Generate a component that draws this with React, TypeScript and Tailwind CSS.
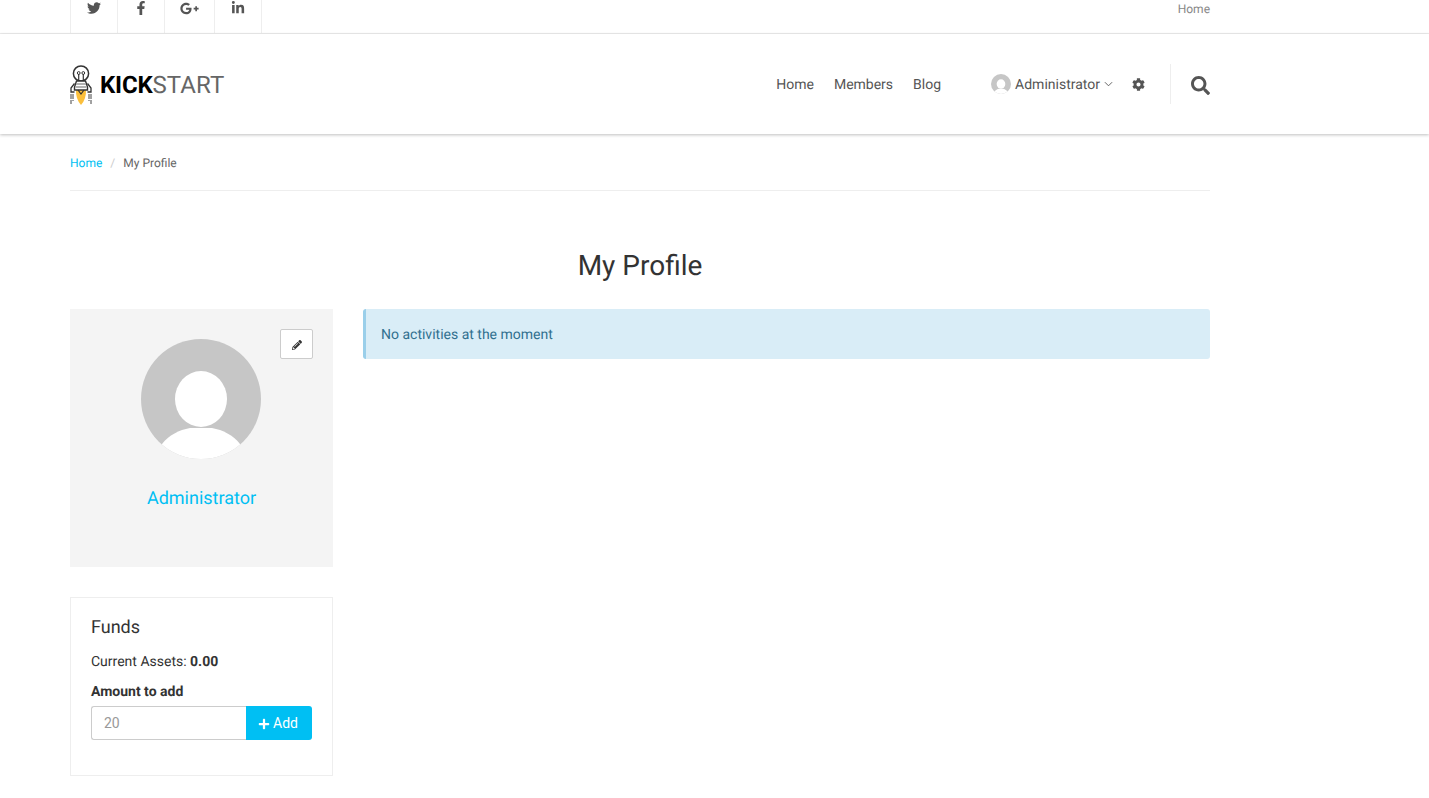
import { FaTwitter, FaFacebookF, FaGooglePlusG, FaLinkedinIn, FaCog, FaSearch, FaPencilAlt, FaPlus } from 'react-icons/fa';

const Avatar = ({ className }: { className: string }) => (
  <svg viewBox="0 0 120 120" className={className}>
    <defs>
      <clipPath id="avatar-clip">
        <circle cx="60" cy="60" r="60" />
      </clipPath>
    </defs>
    <circle cx="60" cy="60" r="60" fill="#c6c6c6" />
    <g clipPath="url(#avatar-clip)" fill="#fff">
      <ellipse cx="60" cy="60" rx="26" ry="28" />
      <path d="M21 105 C28 96 38 91 49 89 L71 89 C82 91 92 96 99 105 L99 120 L21 120 Z" />
    </g>
  </svg>
);

const Logo = () => (
  <svg viewBox="0 0 22 40" className="w-[22px] h-[40px]">
    <path d="M6 24 H16 Q16.5 34 11 40 Q5.5 34 6 24 Z" fill="#fbbf3c" />
    <circle cx="11" cy="8.5" r="7.6" fill="none" stroke="#333" strokeWidth="1.5" />
    <path d="M8.7 9 V16 M13.3 9 V16" stroke="#333" strokeWidth="1.2" fill="none" />
    <circle cx="8.7" cy="8" r="1.4" fill="none" stroke="#333" strokeWidth="1" />
    <circle cx="13.3" cy="8" r="1.4" fill="none" stroke="#333" strokeWidth="1" />
    <path d="M6.5 16 H15.5 L17.5 22 V25 H4.5 V22 Z" fill="#fff" stroke="#333" strokeWidth="1.4" />
    <path d="M6 19 H16 M5.5 22 H16.5" stroke="#999" strokeWidth="1.3" />
    <path d="M4.5 18.5 L1 23 V27 H4.5 M17.5 18.5 L21 23 V27 H17.5" fill="none" stroke="#333" strokeWidth="1.3" />
    <path d="M8 25 L11 29 L14 25" fill="none" stroke="#333" strokeWidth="1.2" />
    <path d="M1 29 V39 M3 29 V36 M19 29 V36 M21 29 V39" stroke="#444" strokeWidth="1" strokeDasharray="5 1" />
  </svg>
);

const socials = [
  { icon: <FaTwitter className="text-[14px]" />, width: 'w-[47px]', pad: 'pt-[1px]' },
  { icon: <FaFacebookF className="text-[14px]" />, width: 'w-[47px]', pad: 'pt-[1px]' },
  { icon: <FaGooglePlusG className="text-[19px]" />, width: 'w-[50px]', pad: '-mt-[1px]' },
  { icon: <FaLinkedinIn className="text-[14px]" />, width: 'w-[47px]', pad: 'pt-[1px]' },
];

export default function App() {
  return (
    <div className="min-h-[798px] bg-white text-[14px] text-[#333] font-['Roboto',sans-serif] [text-rendering:geometricPrecision]">
      {/* Top bar */}
      <div className="h-[34px] border-b border-[#eeeeee]">
        <div className="ml-[70px] w-[1140px] flex justify-between">
          <div className="flex border-r border-[#eeeeee] h-[33px]">
            {socials.map((s, i) => (
              <div key={i} className={`${s.width} border-l border-[#eeeeee]`}>
                <div className={`${s.pad} flex justify-center text-[#555]`}>{s.icon}</div>
              </div>
            ))}
          </div>
          <a className="text-[12px] leading-[18px] text-[#888]">Home</a>
        </div>
      </div>

      {/* Main header */}
      <header className="h-[100px] relative shadow-[0_1px_3px_rgba(0,0,0,0.25)]">
        <div className="ml-[70px] w-[1140px] h-full flex items-center justify-between">
          <div className="flex items-center gap-[8px] pt-[2px]">
            <Logo />
            <span className="text-[24px] leading-none text-[#666]">
              <b className="font-bold text-black tracking-[-0.2px]">KICK</b>
              <span className="tracking-[0.1px]">START</span>
            </span>
          </div>
          <nav className="flex items-center h-[40px] text-[#555]">
            <a className="mr-[20px] pt-[2px]">Home</a>
            <a className="mr-[20px] pt-[2px]">Members</a>
            <a className="mr-[50px] pt-[2px]">Blog</a>
            <Avatar className="w-[20px] h-[20px] mr-[4px]" />
            <a className="pt-[2px]">Administrator</a>
            <svg viewBox="0 0 10 6" className="ml-[4px] w-[9px] h-[6px] mr-[19px]">
              <path d="M1 1 L5 5 L9 1" fill="none" stroke="#555" strokeWidth="1" />
            </svg>
            <FaCog className="text-[13px] mr-[25px]" />
            <div className="w-px h-[40px] bg-[#eeeeee] mr-[20px]" />
            <FaSearch className="text-[19px] mt-[2px]" />
          </nav>
        </div>
      </header>

      <main className="ml-[70px] w-[1140px]">
        {/* Breadcrumb */}
        <div className="h-[57px] border-b border-[#eeeeee] flex items-center gap-[8px] text-[12px] pt-[1px]">
          <a className="text-[#00bff3]">Home</a>
          <span className="text-[#ccc]">/</span>
          <span className="text-[#666]">My Profile</span>
        </div>

        <h1 className="mt-[57px] h-[61px] text-center text-[28px] leading-[36px] font-normal text-[#333]">My Profile</h1>

        <div className="flex gap-[30px] items-start">
          <div className="w-[263px] shrink-0">
            <div className="relative h-[258px] bg-[#f4f4f4] flex flex-col items-center pt-[30px]">
              <button className="absolute top-[20px] right-[20px] w-[33px] h-[30px] bg-white border border-[#ccc] rounded-[2px] flex items-center justify-center pt-[1px]">
                <FaPencilAlt className="text-[10px] text-[#333]" />
              </button>
              <Avatar className="w-[120px] h-[120px] mr-[1px]" />
              <a className="mt-[27px] text-[18px] leading-[26px] text-[#00bff3]">Administrator</a>
            </div>

            <div className="mt-[30px] h-[179px] border border-[#eeeeee] px-[20px] pt-[18px]">
              <h3 className="text-[18px] leading-[24px] font-normal text-[#333]">Funds</h3>
              <p className="mt-[12px] leading-[20px]">
                Current Assets: <b className="font-bold">0.00</b>
              </p>
              <label className="block mt-[10px] leading-[20px] font-bold">Amount to add</label>
              <div className="mt-[4px] flex h-[34px]">
                <input
                  placeholder="20"
                  className="w-[155px] h-full border border-r-0 border-[#ccc] rounded-l-[3px] px-[12px] outline-none placeholder:text-[#999]"
                />
                <button className="w-[66px] h-full bg-[#00bff3] text-white rounded-r-[3px] flex items-center justify-center gap-[3px] pr-[2px] pt-[1px]">
                  <FaPlus className="text-[12px]" />
                  Add
                </button>
              </div>
            </div>
          </div>

          <div className="flex-1 h-[50px] bg-[#d9edf7] border-l-[3px] border-[#9acfea] rounded-[3px] text-[#31708f] flex items-center px-[15px] pt-[2px]">
            No activities at the moment
          </div>
        </div>
      </main>
    </div>
  );
}
